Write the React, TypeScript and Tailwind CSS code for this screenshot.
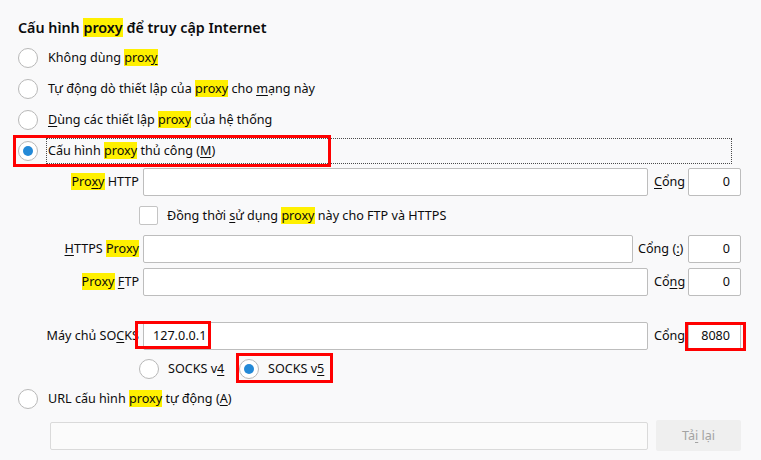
import React from "react";

type Kids = { children: React.ReactNode };

const Hl = ({ children }: Kids) => <span className="bg-[#fff000]">{children}</span>;
const U = ({ children }: Kids) => (
  <span className="underline decoration-1 underline-offset-[2px]">{children}</span>
);

function Radio({ checked = false }: { checked?: boolean }) {
  return (
    <span className="flex h-[20px] w-[20px] shrink-0 items-center justify-center rounded-full border border-[#b8b8b8] bg-white">
      {checked && <span className="h-[10px] w-[10px] rounded-full bg-[#2389d7]" />}
    </span>
  );
}

function Field({ width, value = "", right = false }: { width: string; value?: string; right?: boolean }) {
  return (
    <div
      className={`flex h-[28px] shrink-0 items-center rounded-[2px] border border-[#bdbdbd] bg-white ${width} ${
        right ? "justify-end pr-[10px]" : "pl-[9px]"
      }`}
    >
      {value}
    </div>
  );
}

function ProxyRow({
  label,
  port,
  inputW,
  portLabel,
  value = "",
  portValue = "0",
}: {
  label: React.ReactNode;
  port: React.ReactNode;
  inputW: string;
  portLabel: string;
  value?: string;
  portValue?: string;
}) {
  return (
    <div className="flex h-[28px] items-center">
      <div className="w-[139px] shrink-0 whitespace-nowrap text-right">{label}</div>
      <div className="ml-[4px]">
        <Field width={inputW} value={value} />
      </div>
      <div className={`whitespace-nowrap ${portLabel}`}>{port}</div>
      <Field width="w-[53px]" value={portValue} right />
    </div>
  );
}

const options: React.ReactNode[] = [
  <>
    Không dùng <Hl>prox<U>y</U></Hl>
  </>,
  <>
    Tự động dò thiết lập của <Hl>proxy</Hl> cho <U>m</U>ạng này
  </>,
  <>
    <U>D</U>ùng các thiết lập <Hl>proxy</Hl> của hệ thống
  </>,
];

export default function App() {
  return (
    <div className="relative h-[460px] w-[761px] overflow-hidden bg-[#f9f9fa] font-['Noto_Sans',sans-serif] text-[12.6px] leading-[18px] text-[#0c0c0d]">
      <div className="pl-[18px] pt-[18px] text-[14.3px] font-semibold leading-[20px]">
        Cấu hình <Hl>proxy</Hl> để truy cập Internet
      </div>

      <div className="mt-[4px]">
        {options.map((o, i) => (
          <div key={i} className="flex h-[31px] items-center pl-[18px]">
            <Radio />
            <span className="ml-[8px] border border-transparent px-[1px] leading-[24px]">{o}</span>
          </div>
        ))}
        <div className="flex h-[31px] w-[732px] items-center pl-[18px]">
          <Radio checked />
          <span className="ml-[8px] h-[26px] flex-1 border border-dotted border-[#4a4a4a] px-[1px] leading-[24px]">
            Cấu hình <Hl>proxy</Hl> thủ công (<U>M</U>)
          </span>
        </div>
      </div>

      <div className="mt-[2px]">
        <ProxyRow
          label={
            <>
              <Hl>
                Pro<U>x</U>y
              </Hl>{" "}
              HTTP
            </>
          }
          inputW="w-[505px]"
          portLabel="w-[40px] pl-[6px]"
          port={
            <>
              <U>C</U>ổng
            </>
          }
        />

        <div className="flex h-[39px] items-center pl-[139px]">
          <span className="h-[19px] w-[19px] shrink-0 rounded-[2px] border border-[#c4c4c4] bg-white" />
          <span className="ml-[9px]">
            Đồng thời <U>s</U>ử dụng <Hl>proxy</Hl> này cho FTP và HTTPS
          </span>
        </div>

        <ProxyRow
          label={
            <>
              <U>H</U>TTPS <Hl>Proxy</Hl>
            </>
          }
          inputW="w-[490px]"
          portLabel="w-[55px] pl-[5px]"
          port={
            <>
              Cổng (<U>:</U>)
            </>
          }
        />

        <div className="mt-[5px]">
          <ProxyRow
            label={
              <>
                <Hl>Proxy</Hl> <U>F</U>TP
              </>
            }
            inputW="w-[505px]"
            portLabel="w-[40px] pl-[6px]"
            port={
              <>
                Cổ<U>n</U>g
              </>
            }
          />
        </div>

        <div className="mt-[26px]">
          <ProxyRow
            label={
              <>
                Máy chủ SO<U>C</U>KS
              </>
            }
            inputW="w-[505px]"
            portLabel="w-[40px] pl-[6px]"
            port="Cổng"
            value="127.0.0.1"
            portValue="8080"
          />
        </div>

        <div className="mt-[5px] flex h-[28px] items-center pl-[139px]">
          <div className="flex w-[100px] items-center">
            <Radio />
            <span className="ml-[9px] whitespace-nowrap">
              SOCKS v<U>4</U>
            </span>
          </div>
          <div className="flex items-center">
            <Radio checked />
            <span className="ml-[9px] whitespace-nowrap">
              SOCKS v<U>5</U>
            </span>
          </div>
        </div>

        <div className="flex h-[32px] items-center pl-[18px]">
          <Radio />
          <span className="ml-[8px] border border-transparent px-[1px] leading-[24px]">
            URL cấu hình <Hl>proxy</Hl> tự động (<U>A</U>)
          </span>
        </div>

        <div className="mt-[5px] flex items-center pl-[50px]">
          <div className="h-[28px] w-[598px] rounded-[2px] border border-[#dadada] bg-[#fbfbfb]" />
          <div className="ml-[8px] flex h-[31px] w-[85px] items-center justify-center rounded-[2px] bg-[#efefef] text-[#a3a3a3]">
            <span>
              Tả<U>i</U> lại
            </span>
          </div>
        </div>
      </div>

      {/* red annotation boxes */}
      <div className="pointer-events-none absolute left-[13px] top-[135px] h-[32px] w-[318px] border-[3px] border-[#ff0000]" />
      <div className="pointer-events-none absolute left-[135px] top-[321px] h-[28px] w-[76px] border-[3px] border-[#ff0000]" />
      <div className="pointer-events-none absolute left-[685px] top-[322px] h-[29px] w-[61px] border-[3px] border-[#ff0000]" />
      <div className="pointer-events-none absolute left-[236px] top-[353px] h-[30px] w-[97px] border-[3px] border-[#ff0000]" />
    </div>
  );
}
